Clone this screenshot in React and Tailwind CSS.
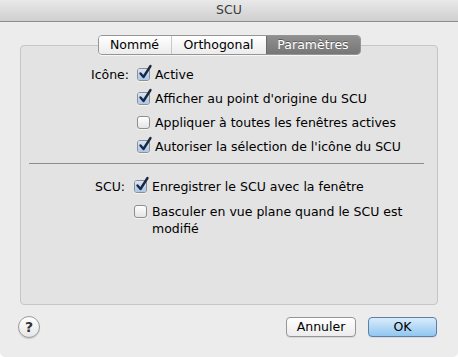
import React from "react";

function Check({ checked }) {
  return (
    <span className="relative block w-[13px] h-[13px] shrink-0 rounded-[3px] border border-[#8e8e8e] bg-gradient-to-b from-[#ffffff] to-[#e4e4e4] shadow-[0_1px_0_rgba(255,255,255,0.6)]">
      {checked && (
        <>
          <span className="absolute inset-0 rounded-[2px] bg-gradient-to-b from-[#d7e6f7] to-[#a9c6ea]" />
          <svg className="absolute left-[0px] top-[-5px]" width="15" height="16" viewBox="0 0 15 16">
            <path d="M2.5 9.5 L5.5 13 L12.5 2" fill="none" stroke="#1c2840" strokeWidth="2.4" strokeLinecap="round" strokeLinejoin="round" />
          </svg>
        </>
      )}
    </span>
  );
}

function Row({ checked, children }) {
  return (
    <div className="flex items-start gap-[5px]">
      <div className="flex pt-[2px]">
        <Check checked={checked} />
      </div>
      <div className="leading-[17px]">{children}</div>
    </div>
  );
}

export default function App() {
  return (
    <div
      className="w-[458px] h-[357px] bg-[#ececec] flex flex-col text-[12.5px] text-black rounded-b-[5px] overflow-hidden"
      style={{ fontFamily: '"DejaVu Sans", "Liberation Sans", sans-serif' }}
    >
      {/* title bar */}
      <div className="h-[22px] shrink-0 flex items-center justify-center bg-gradient-to-b from-[#e9e9e9] to-[#cfcfcf] border-b border-[#8c8c8c] text-[#3c3c3c]">
        SCU
      </div>

      <div className="px-[20px] flex flex-col">
        {/* tabs */}
        <div className="mt-[13px] flex justify-center relative z-10">
          <div className="flex h-[20px] rounded-[4px] border border-[#959595] shadow-[0_1px_0_rgba(255,255,255,0.7)] overflow-hidden">
            <div className="w-[73px] flex items-center justify-center bg-gradient-to-b from-[#ffffff] to-[#ececec] border-r border-[#c8c8c8]">
              Nommé
            </div>
            <div className="w-[94px] flex items-center justify-center bg-gradient-to-b from-[#ffffff] to-[#ececec]">
              Orthogonal
            </div>
            <div className="w-[94px] flex items-center justify-center bg-gradient-to-b from-[#8f8f8f] to-[#777777] text-white [text-shadow:0_-1px_0_rgba(0,0,0,0.35)] border-l border-[#6a6a6a]">
              Paramètres
            </div>
          </div>
        </div>

        {/* group box */}
        <div className="-mt-[10px] h-[260px] rounded-[4px] border border-[#c6c6c6] bg-[#e3e3e3] flex flex-col">
          <div className="mt-[20px] flex">
            <div className="w-[108px] text-right leading-[17px]">Icône:</div>
            <div className="ml-[8px] flex flex-col gap-[7px]">
              <Row checked>Active</Row>
              <Row checked>Afficher au point d'origine du SCU</Row>
              <Row>Appliquer à toutes les fenêtres actives</Row>
              <Row checked>Autoriser la sélection de l'icône du SCU</Row>
            </div>
          </div>

          <div className="mt-[8px] ml-[8px] mr-[13px] h-px bg-[#8e8e8e]" />

          <div className="mt-[14px] flex">
            <div className="w-[104px] text-right leading-[17px]">SCU:</div>
            <div className="ml-[9px] flex flex-col gap-[8px]">
              <Row checked>Enregistrer le SCU avec la fenêtre</Row>
              <Row>
                Basculer en vue plane quand le SCU est
                <br />
                modifié
              </Row>
            </div>
          </div>
        </div>
      </div>

      {/* bottom buttons */}
      <div className="mt-[11px] pl-[18px] pr-[21px] flex items-center">
        <div className="w-[22px] h-[22px] rounded-full border border-[#9a9a9a] bg-gradient-to-b from-[#ffffff] to-[#e6e6e6] flex items-center justify-center font-bold text-[14px] text-[#333] shadow-[0_1px_1px_rgba(0,0,0,0.15)]">
          ?
        </div>
        <div className="flex-1" />
        <button className="w-[70px] h-[20px] rounded-[4px] border border-[#959595] bg-gradient-to-b from-[#ffffff] to-[#ececec] flex items-center justify-center shadow-[0_1px_0_rgba(0,0,0,0.08)]">
          Annuler
        </button>
        <button className="ml-[12px] w-[69px] h-[20px] rounded-[4px] border border-[#5b7eab] bg-gradient-to-b from-[#d9ecfb] to-[#90c6ef] flex items-center justify-center shadow-[0_1px_0_rgba(0,0,0,0.08)]">
          OK
        </button>
      </div>
    </div>
  );
}
